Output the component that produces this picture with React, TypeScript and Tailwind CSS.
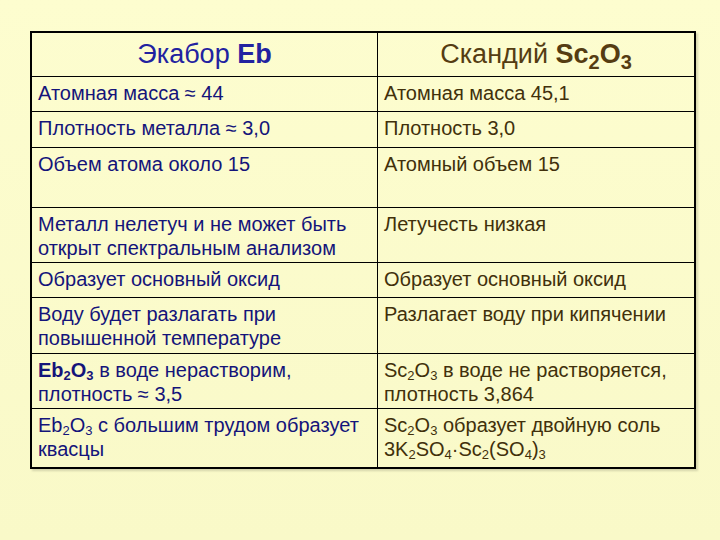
import type { ReactNode } from "react";

const blue = "text-[#14147a]";
const brown = "text-[#41300b]";

type Row = { h: string; left: ReactNode; right: ReactNode };

// small subscript for body text, kept inside the line box
const S = ({ children }: { children: ReactNode }) => (
  <span className="relative top-[3px] text-[13px] leading-none">{children}</span>
);
const HS = ({ children }: { children: ReactNode }) => (
  <span className="relative top-[6px] text-[20px] leading-none">{children}</span>
);

const rows: Row[] = [
  { h: "h-[35px]", left: "Атомная масса ≈ 44", right: "Атомная масса 45,1" },
  { h: "h-[36px]", left: "Плотность металла ≈ 3,0", right: "Плотность 3,0" },
  { h: "h-[60px]", left: "Объем атома около 15", right: "Атомный объем 15" },
  {
    h: "h-[55px]",
    left: <>Металл нелетуч и не может быть<br />открыт спектральным анализом</>,
    right: "Летучесть низкая",
  },
  { h: "h-[35px]", left: "Образует основный оксид", right: "Образует основный оксид" },
  {
    h: "h-[56px]",
    left: <>Воду будет разлагать при<br />повышенной температуре</>,
    right: "Разлагает воду при кипячении",
  },
  {
    h: "h-[55px]",
    left: <><b>Eb<S>2</S>O<S>3</S></b> в воде нерастворим,<br />плотность ≈ 3,5</>,
    right: <>Sc<S>2</S>O<S>3</S> в воде не растворяется,<br />плотность 3,864</>,
  },
  {
    h: "h-[59px]",
    left: <>Eb<S>2</S>O<S>3</S> с большим трудом образует<br />квасцы</>,
    right: <>Sc<S>2</S>O<S>3</S> образует двойную соль<br />3K<S>2</S>SO<S>4</S>·Sc<S>2</S>(SO<S>4</S>)<S>3</S></>,
  },
];

export default function App() {
  return (
    <div className="h-[540px] w-[720px] overflow-hidden bg-gradient-to-b from-[#fdfdcf] to-[#f9f9c8] pl-[30px] pt-[31px] font-['Liberation_Sans',Arial,sans-serif]">
      <div className="w-[666px] border-2 border-black shadow-[2px_2px_2px_rgba(0,0,0,0.15)]">
        <div className="flex h-[43px] text-[27px] leading-none">
          <div className="flex w-[346px] items-center justify-center border-r border-black pb-[1px] text-[#2222a0]">
            Экабор&nbsp;<b>Eb</b>
          </div>
          <div className="flex flex-1 items-center justify-center pb-[1px] text-[#553c12]">
            Скандий&nbsp;<b>Sc<HS>2</HS>O<HS>3</HS></b>
          </div>
        </div>
        {rows.map((r, i) => (
          <div key={i} className={`flex border-t border-black text-[20px] leading-[24px] ${r.h}`}>
            <div className={`w-[346px] border-r border-black pl-[6px] pt-[4px] ${blue}`}>{r.left}</div>
            <div className={`flex-1 pl-[6px] pt-[4px] ${brown}`}>{r.right}</div>
          </div>
        ))}
      </div>
    </div>
  );
}
